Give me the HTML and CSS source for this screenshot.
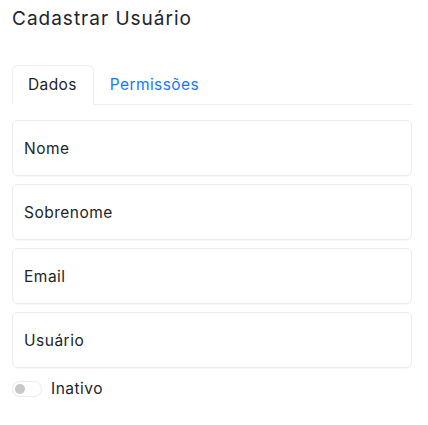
FILE: index.html
```html
<!DOCTYPE html>
<html lang="pt-BR">
<head>
  <meta charset="UTF-8">
  <meta name="viewport" content="width=device-width, initial-scale=1.0">
  <title>Cadastrar Usuário</title>
  <link rel="stylesheet" href="styles.css">
</head>
<body>
  <div class="container">
    <h1 class="title">Cadastrar Usuário</h1>
    <ul class="tabs">
      <li class="tab active">Dados</li>
      <li class="tab">Permissões</li>
    </ul>
    <form class="form">
      <input class="field" type="text" placeholder="Nome">
      <input class="field" type="text" placeholder="Sobrenome">
      <input class="field" type="email" placeholder="Email">
      <input class="field" type="text" placeholder="Usuário">
      <label class="switch">
        <span class="switch-track"><span class="switch-knob"></span></span>
        <span class="switch-label">Inativo</span>
      </label>
    </form>
  </div>
</body>
</html>
```

FILE: styles.css
```css
body {
  margin: 0;
  padding: 0;
  background-color: #fff;
  font-family: Inter, "Noto Sans", sans-serif;
  color: #212529;
}
.container {
  padding: 6px 16px 0 12px;
}
.title {
  margin: 0;
  font-size: 19px;
  font-weight: 400;
  line-height: 26px;
  letter-spacing: 1px;
}
.tabs {
  list-style: none;
  margin: 33px 0 0 0;
  padding: 0;
  display: flex;
  border-bottom: 1px solid #eceef0;
}
.tab {
  padding: 0 16px 0 15px;
  height: 38px;
  line-height: 38px;
  font-size: 15.5px;
  letter-spacing: 0.4px;
  color: #1677ff;
  margin-bottom: -1px;
  border: 1px solid transparent;
  border-radius: 6px 6px 0 0;
}
.tab.active {
  color: #212529;
  border-color: #eceef0 #eceef0 #fff;
  background-color: #fff;
}
.form {
  display: flex;
  flex-direction: column;
  gap: 8px;
  padding-top: 15px;
}
.field {
  box-sizing: border-box;
  height: 56px;
  padding: 0 11px;
  border: 1px solid #e9ebee;
  border-radius: 6px;
  font-family: inherit;
  font-size: 15.5px;
  letter-spacing: 0.5px;
  color: #212529;
  background-color: #fff;
  box-shadow: 0 1px 1px rgba(0, 0, 0, 0.03);
}
.field::placeholder {
  color: #212529;
}
.switch {
  display: flex;
  align-items: center;
  gap: 9px;
  margin-top: 5px;
  height: 16px;
  line-height: 16px;
}
.switch-track {
  box-sizing: border-box;
  width: 30px;
  height: 16px;
  border: 1px solid #e9ebee;
  border-radius: 8px;
  display: flex;
  align-items: center;
  padding-left: 2px;
}
.switch-knob {
  width: 10px;
  height: 10px;
  border-radius: 50%;
  background-color: #c6c8ca;
}
.switch-label {
  font-size: 15.5px;
  letter-spacing: 0.5px;
}
```
